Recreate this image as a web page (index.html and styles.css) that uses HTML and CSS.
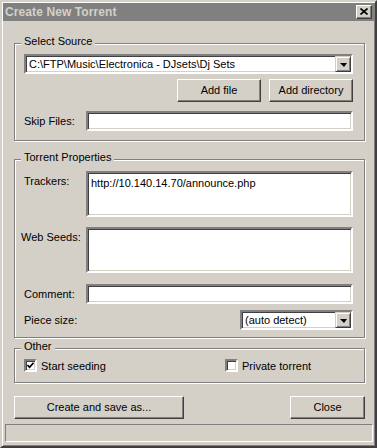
FILE: index.html
```html
<!DOCTYPE html>
<html>
<head>
	<meta charset="UTF-8">
	<title>Create New Torrent</title>
	<link rel="stylesheet" href="styles.css">
</head>
<body>
	<div class="window">
		<div class="titlebar">
			<span class="title">Create New Torrent</span>
			<span class="close-btn">
				<svg width="8" height="7" viewBox="0 0 8 7"><path d="M0.5 0.5 L7.5 6.5 M7.5 0.5 L0.5 6.5" stroke="#000" stroke-width="1.6" fill="none"/></svg>
			</span>
		</div>

		<div class="content">
			<div class="group group-source">
				<div class="group-title">Select Source</div>
				<div class="combo">
					<span class="combo-text">C:\FTP\Music\Electronica - DJsets\Dj Sets</span>
					<span class="combo-arrow"><i class="tri"></i></span>
				</div>
				<div class="add-row">
					<div class="btn btn-add">Add file</div>
					<div class="btn btn-add">Add directory</div>
				</div>
				<div class="field-row row-skip">
					<span class="label">Skip Files:</span>
					<div class="input"></div>
				</div>
			</div>

			<div class="group group-props">
				<div class="group-title">Torrent Properties</div>
				<div class="field-row row-top row-trackers">
					<span class="label">Trackers:</span>
					<div class="input textarea">http://10.140.14.70/announce.php</div>
				</div>
				<div class="field-row row-top row-seeds">
					<span class="label label-wide">Web Seeds:</span>
					<div class="input textarea"></div>
				</div>
				<div class="field-row row-comment">
					<span class="label">Comment:</span>
					<div class="input"></div>
				</div>
				<div class="field-row row-piece">
					<span class="label">Piece size:</span>
					<div class="combo combo-small">
						<span class="combo-text">(auto detect)</span>
						<span class="combo-arrow"><i class="tri"></i></span>
					</div>
				</div>
			</div>

			<div class="group group-other">
				<div class="group-title">Other</div>
				<div class="check-row">
					<div class="check check-first">
						<span class="box">
							<svg width="7" height="7" viewBox="0 0 7 7"><path d="M0.5 3 L2.6 5.3 L6.5 0.8" stroke="#000" stroke-width="1.7" fill="none"/></svg>
						</span>
						<span>Start seeding</span>
					</div>
					<div class="check">
						<span class="box"></span>
						<span>Private torrent</span>
					</div>
				</div>
			</div>

			<div class="bottom-row">
				<div class="btn btn-create">Create and save as...</div>
				<div class="btn btn-close">Close</div>
			</div>
		</div>

		<div class="statusbar"></div>
	</div>
</body>
</html>
```

FILE: styles.css
```css
* {
	box-sizing: border-box;
}

body {
	margin: 0;
	background: #d4d0c8;
	font-family: "Liberation Sans", Arial, sans-serif;
	font-size: 11px;
	color: #000;
}

.window {
	width: 377px;
	height: 448px;
	padding: 1px;
	background: #d4d0c8;
	border: 2px solid;
	border-color: #d4d0c8 #404040 #404040 #d4d0c8;
	box-shadow: inset 1px 1px 0 #fff, inset -1px -1px 0 #808080;
	display: flex;
	flex-direction: column;
}

/* title bar (inactive) */
.titlebar {
	height: 18px;
	background: #808080;
	display: flex;
	align-items: center;
	justify-content: space-between;
	padding: 0 2px 0 2px;
}

.title {
	color: #d4d0c8;
	font-weight: bold;
	font-size: 12px;
	letter-spacing: 0.1px;
}

.close-btn {
	width: 16px;
	height: 14px;
	background: #d4d0c8;
	border: 1px solid;
	border-color: #fff #404040 #404040 #fff;
	box-shadow: inset -1px -1px 0 #808080;
	display: flex;
	align-items: center;
	justify-content: center;
	padding: 0 1px 1px 0;
}

.close-btn svg {
	display: block;
}

.content {
	padding: 0 9px 0 11px;
	display: flex;
	flex-direction: column;
}

/* group boxes */
.group {
	border: 1px solid #808080;
	box-shadow: inset 1px 1px 0 #fff, 1px 1px 0 #fff;
	padding: 0 11px 9px 9px;
	display: flex;
	flex-direction: column;
}

.group-title {
	align-self: flex-start;
	line-height: 13px;
	margin: -9px 0 0 -3px;
	padding: 0 3px;
	background: #d4d0c8;
}

.group-source {
	margin-top: 22px;
}

.group-props {
	margin-top: 18px;
	padding-bottom: 7px;
}

.group-other {
	margin-top: 10px;
	padding-bottom: 10px;
}

/* sunken fields */
.input,
.combo,
.box {
	background: #fff;
	border: 2px solid;
	border-color: #808080 #fff #fff #808080;
	box-shadow: inset 1px 1px 0 #404040, inset -1px -1px 0 #d4d0c8;
}

.input {
	flex: 1;
	height: 20px;
	padding: 2px 3px;
}

.textarea {
	height: 46px;
	padding: 3px 3px;
	line-height: 14px;
}

.combo {
	height: 20px;
	display: flex;
	align-items: center;
	padding-left: 3px;
	margin-top: 6px;
}

.combo-text {
	flex: 1;
	white-space: nowrap;
}

.combo-arrow {
	width: 16px;
	height: 16px;
	background: #d4d0c8;
	border: 1px solid;
	border-color: #d4d0c8 #404040 #404040 #d4d0c8;
	box-shadow: inset 1px 1px 0 #fff, inset -1px -1px 0 #808080;
	display: flex;
	align-items: center;
	justify-content: center;
}

.tri {
	width: 0;
	height: 0;
	border-left: 4px solid transparent;
	border-right: 3px solid transparent;
	border-top: 4px solid #000;
	margin-top: 1px;
}

.combo-small {
	width: 113px;
	margin: 0 0 0 auto;
}

/* buttons */
.btn {
	height: 23px;
	background: #d4d0c8;
	border: 1px solid;
	border-color: #fff #404040 #404040 #fff;
	box-shadow: inset -1px -1px 0 #808080;
	display: flex;
	align-items: center;
	justify-content: center;
	padding-bottom: 1px;
}

.add-row {
	display: flex;
	justify-content: flex-end;
	gap: 8px;
	margin-top: 5px;
}

.btn-add {
	width: 84px;
}

.field-row {
	display: flex;
	align-items: center;
}

.row-top {
	align-items: flex-start;
}

.label {
	width: 62px;
	flex-shrink: 0;
	line-height: 13px;
}

.row-top .label {
	padding-top: 4px;
}

.label-wide {
	margin-left: -3px;
	width: 65px;
}

.row-skip {
	margin-top: 9px;
}

.row-trackers {
	margin-top: 7px;
}

.row-seeds {
	margin-top: 10px;
}

.row-comment {
	margin-top: 11px;
}

.row-piece {
	margin-top: 6px;
}

/* checkboxes */
.check-row {
	display: flex;
	margin-top: 6px;
}

.check {
	display: flex;
	align-items: center;
	gap: 4px;
	height: 13px;
}

.check-first {
	width: 201px;
}

.box {
	width: 13px;
	height: 13px;
	display: flex;
	align-items: center;
	justify-content: center;
}

.box svg {
	display: block;
}

.bottom-row {
	display: flex;
	justify-content: space-between;
	margin-top: 13px;
}

.btn-create {
	width: 170px;
}

.btn-close {
	width: 75px;
}

.statusbar {
	height: 18px;
	margin: 5px 1px 0 2px;
	border: 1px solid;
	border-color: #808080 #fff #fff #808080;
}
```
